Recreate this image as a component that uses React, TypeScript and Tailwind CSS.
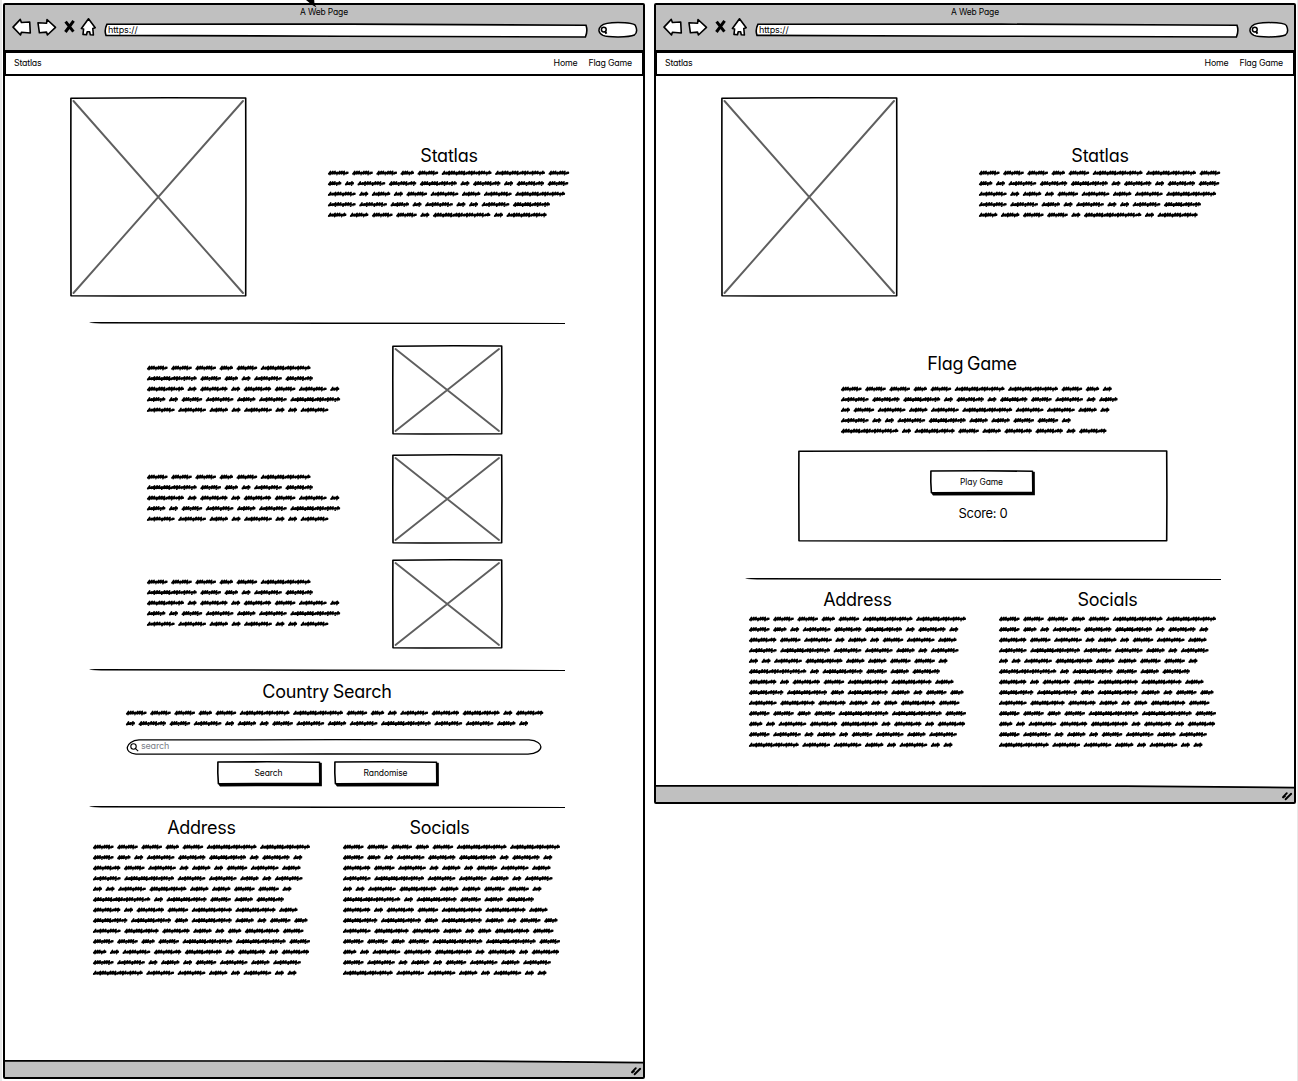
import React from "react";

const WORD: Record<string, number> = {
  a: 20.8, b: 13.6, c: 9.2, d: 27.9, e: 50, f: 27.6, g: 37.2, h: 18.6, i: 40.3, j: 57.6, k: 34.6,
};
const GAP = 3.4;
const LINE = 10.5;

const HERO = ["aaabaeea", "bcdfgcfcfa", "dchcadhde", "ddhcdccdg", "hhaacjci"];
const FEATURE = ["aaabae", "eabcdf", "gcfcfadc", "hcadhde", "ddhcdccd"];
const SEARCH = ["aaabaeeabcdfgcf", "cfadchcadhdeddhc"];
const FLAG = ["aaabaeeabc", "dfgcfcfadch", "cadhdeddhc", "dccdghhaac", "jciahffcf"];
const COLUMN = [
  "aaabaee", "abcdfgcfc", "fadchcadh", "deddhcd", "ccdghhaac", "jciahf", "fcfaiih",
  "kibihcab", "dkfhcbka", "aabaeea", "bcdfgcfcf", "adchcadhd", "eddhcdcc",
];

function wordPath(x: number, y: number, kind: string) {
  const w = WORD[kind];
  const heavy = "cdehi".includes(kind);
  let d = `M${x + 0.7} ${y + (heavy ? 1.2 : 0.9)}`;
  const n = Math.max(3, Math.round(w / 2.7));
  const step = (w - 2.4) / n;
  for (let i = 0; i < n; i++) {
    const px = x + 0.9 + i * step;
    const up = (i * 7 + (heavy ? 1 : 3)) % 4 === 0 ? 0.7 : 1.6;
    const down = (i * 5 + (heavy ? 2 : 0)) % 3 === 0 ? 1.6 : 0.9;
    d += `L${(px + step * 0.7).toFixed(2)} ${y - up}L${(px + step * 0.5).toFixed(2)} ${y + down}`;
  }
  d += `L${x + w - 1} ${y - 0.6}M${x + 0.8} ${y + 0.6}L${x + w - 1} ${y + 0.2}`;
  return d;
}

function Scribble({ lines, className }: { lines: string[]; className: string }) {
  const parts: string[] = [];
  lines.forEach((line, row) => {
    let x = 0;
    for (const kind of line) {
      parts.push(wordPath(x, 5 + row * LINE, kind));
      x += WORD[kind] + GAP;
    }
  });
  return (
    <svg className={"block shrink-0 overflow-visible " + className} fill="none" stroke="#000" strokeWidth="1.6" strokeLinejoin="round" strokeLinecap="round">
      <path d={parts.join("")} />
    </svg>
  );
}

function Outline({ w, h }: { w: number; h: number }) {
  return (
    <svg className="absolute inset-0 h-full w-full" viewBox={`0 0 ${w} ${h}`} fill="none" stroke="#000" strokeWidth="1.6" strokeLinejoin="round">
      <path d={`M.9 1.2L${w * 0.55} .8L${w - 1.3} 1L${w - 1.1} ${h * 0.5}L${w - 1.3} ${h - 1.3}L${w * 0.3} ${h - 1}L1 ${h - 1.2}L.8 ${h * 0.4}Z`} />
    </svg>
  );
}

function Placeholder({ w, h, className }: { w: number; h: number; className: string }) {
  return (
    <div className={"relative shrink-0 " + className}>
      <Outline w={w} h={h} />
      <svg className="absolute inset-0 h-full w-full" viewBox={`0 0 ${w} ${h}`} stroke="#5f5f5f" strokeWidth="1.9" strokeLinecap="round">
        <path d={`M3.5 4L${w - 4} ${h - 4}M${w - 4} 4L3.5 ${h - 4}`} />
      </svg>
    </div>
  );
}

function Rule({ className }: { className: string }) {
  return (
    <svg className={"block h-[3px] w-[476px] shrink-0 " + className} viewBox="0 0 476 3">
      <path d="M0 .5L6 0L240 .4L476 1V2L230 2L12 1.5L2 1.1Z" />
    </svg>
  );
}

function Heading({ children, className }: { children: React.ReactNode; className: string }) {
  return (
    <h2 className={"h-6 whitespace-nowrap text-center text-[18px] leading-6 tracking-[-0.25px] [word-spacing:-1px] " + className}>
      {children}
    </h2>
  );
}

function SketchButton({ children }: { children: React.ReactNode }) {
  return (
    <button className="relative h-[26px] w-[106px] pr-[3px] pb-[2px] text-[8.5px] leading-[22px] tracking-[-0.1px]">
      <svg className="absolute inset-0 h-full w-full" viewBox="0 0 106 26">
        <path d="M2 22L104.8 1.8L104.9 25.2L3 25.4Q1.6 25 1.6 22Z" />
        <path d="M.9 1L50 .8L102.6 1.2L102.8 22.4L50 22.6L1.4 22.8L.8 12Z" fill="#fff" stroke="#000" strokeWidth="1.6" strokeLinejoin="round" />
      </svg>
      <span className="relative">{children}</span>
    </button>
  );
}

function Chrome() {
  return (
    <header className="h-[48px] shrink-0 border-b-[3px] border-black bg-[#c0c0c0] pt-px">
      <div className="h-3 text-center text-[8.5px] leading-3 tracking-[-0.15px]">A Web Page</div>
      <div className="flex h-7 items-start pl-[7px]">
        <svg className="h-7 w-[88px] shrink-0" viewBox="0 0 88 28" fill="#fff" stroke="#000" strokeWidth="1.6" strokeLinejoin="round">
          <path d="M1 9.1L8.3 1.4L9.4 4.5L17.7 4L18.3 15L9.4 14.2L8.5 17Z" />
          <path d="M26 4.8L34.6 5.2L35 1.5L43.5 9.4L35.4 17L34.5 14.1L27.4 14.8Z" />
          <path d="M53.6 3.6L61.4 13.6M61.6 2.8L53.4 14" fill="none" strokeWidth="3" />
          <path d="M76.5 .8L83.2 9.7L80.8 10.5L81.4 17L78.3 16.8L77.6 13.7H75.2L74.5 16.8L71 16.4L71.6 11L69.4 10.5Z" />
        </svg>
        <div className="relative mt-[5px] h-[15px] w-[488px] shrink-0">
          <svg className="absolute inset-0 h-full w-full" viewBox="0 0 488 15" fill="#fff" stroke="#000" strokeWidth="1.6">
            <path d="M7 1.2L250 1.1L486 2.2Q488 8 485.4 14L240 13.2L6 12.4Q4 7 7 1.2Z" />
          </svg>
          <span className="relative ml-[8px] block text-[9px] leading-[14px] tracking-[-0.1px]">https://</span>
        </div>
        <svg className="mt-[3px] ml-[8px] h-[18px] w-[42px] shrink-0" viewBox="0 0 42 18" fill="#fff" stroke="#000" strokeWidth="1.5">
          <path d="M5 5C8 2.2 14 1.6 22 1.6C30 1.7 38 2 39.4 4.5C41 8 41 12 38.4 14C33 16.5 12 16.4 7 14.4C2 12 2 8 5 5Z" />
          <circle cx="7.8" cy="8.6" r="2.4" /><path d="M9.2 10.6L10.4 12.8" strokeWidth="2" />
        </svg>
      </div>
    </header>
  );
}

function Nav() {
  return (
    <nav className="-mt-px flex h-[24px] shrink-0 items-center border-b-2 border-l-[1.5px] border-r border-black pr-[10px] pl-2 text-[8.8px] leading-none tracking-[-0.2px]">
      <span>Statlas</span>
      <span className="ml-auto">Home</span>
      <span className="ml-[11px]">Flag Game</span>
    </nav>
  );
}

function Hero() {
  return (
    <section className="flex h-[200px] shrink-0 pl-[65px]">
      <Placeholder w={177} h={200} className="h-[200px] w-[177px]" />
      <div className="ml-[81px] mt-[47px] w-[242px]">
        <Heading className="">Statlas</Heading>
        <Scribble lines={HERO} className="h-[53px] w-[242px]" />
      </div>
    </section>
  );
}

function Feature() {
  return (
    <div className="flex h-[90px] items-start pl-[142px]">
      <Scribble lines={FEATURE} className="mt-[18px] h-[53px] w-[194px]" />
      <Placeholder w={111} h={90} className="ml-[51px] h-[90px] w-[111px]" />
    </div>
  );
}

function Contacts({ socialsClass }: { socialsClass: string }) {
  return (
    <section className="flex shrink-0 gap-[33px]">
      <div className="w-[217px]">
        <Heading className="">Address</Heading>
        <Scribble lines={COLUMN} className="mt-[2px] h-[137px] w-[217px]" />
      </div>
      <div className="w-[217px]">
        <Heading className={socialsClass}>Socials</Heading>
        <Scribble lines={COLUMN} className="mt-[2px] h-[137px] w-[217px]" />
      </div>
    </section>
  );
}

function StatusBar() {
  return (
    <footer className="relative mt-auto flex h-[17px] shrink-0 items-center justify-end pr-px pt-1">
      <svg className="absolute inset-0 h-full w-full" viewBox="0 0 638 17" preserveAspectRatio="none">
        <path d="M0 1H470L638 2.2V17H0Z" fill="#c0c0c0" />
        <path d="M0 .9L470 1.1L560 1.8L638 2.6" fill="none" stroke="#000" strokeWidth="1.7" />
      </svg>
      <svg className="relative h-3 w-3" viewBox="0 0 12 12" stroke="#000" strokeWidth="1.9" strokeLinecap="round">
        <path d="M2 7.2L5.8 3.2M4.6 9.3L10.2 3.8M2.4 7.4L4 6" />
      </svg>
    </footer>
  );
}

function Window({ children, className }: { children: React.ReactNode; className: string }) {
  return (
    <div className={"mt-[3px] flex w-[642px] shrink-0 flex-col rounded-[2px] border-2 border-black bg-white " + className}>
      <Chrome />
      <Nav />
      {children}
      <StatusBar />
    </div>
  );
}

export default function App() {
  return (
    <div className="relative flex h-[1081px] w-[1298px] items-start gap-[9px] overflow-hidden border-l-2 border-[#e8e8e8] bg-white pl-px font-['Inter',sans-serif] text-black [font-feature-settings:'cv11','ss03']">
      <Window className="h-[1076px]">
        <div className="h-[21px] shrink-0" />
        <Hero />
        <Rule className="mt-[25px] ml-[84px]" />
        <div className="mt-[20px] shrink-0">
          <Feature />
          <div className="h-[19px]" />
          <Feature />
          <div className="h-[15px]" />
          <Feature />
        </div>
        <Rule className="mt-5 ml-[84px]" />
        <section className="ml-[121px] mt-2 w-[418px] shrink-0">
          <Heading className="-ml-4">Country Search</Heading>
          <Scribble lines={SEARCH} className="mt-1 h-[21px] w-[418px]" />
          <div className="relative mt-[10px] flex h-[16px] w-[416px] items-center pl-[4px]">
            <svg className="absolute inset-0 h-full w-full" viewBox="0 0 416 16" fill="#fff" stroke="#000" strokeWidth="1.3">
              <path d="M13 .9L210 .7L403 .9C419 2 419 14 402 15.2L200 15L10 15.2C-3 14 -1 2 13 .9Z" />
            </svg>
            <svg className="relative h-[9px] w-[9px]" viewBox="0 0 9 9" fill="none" stroke="#000" strokeWidth="1.1"><circle cx="3.5" cy="3.5" r="2.7" /><path d="M5.5 5.6L8.2 8.2" /></svg>
            <span className="relative ml-[2px] pb-[2px] text-[9px] leading-3 tracking-[-0.2px] text-[#7b8088]">search</span>
          </div>
          <div className="mt-[6px] ml-[91px] flex gap-[11px]">
            <SketchButton>Search</SketchButton>
            <SketchButton>Randomise</SketchButton>
          </div>
        </section>
        <Rule className="mt-[19px] ml-[84px]" />
        <div className="mt-[7px] ml-[88px]"><Contacts socialsClass="-ml-6" /></div>
      </Window>
      <Window className="h-[801px]">
        <div className="h-[21px] shrink-0" />
        <Hero />
        <section className="ml-[142px] mt-[55px] w-[370px] shrink-0">
          <Heading className="-ml-[22px]">Flag Game</Heading>
          <Scribble lines={FLAG} className="ml-[43px] mt-2 h-[53px] w-[277px]" />
          <div className="relative mt-[13px] flex h-[92px] flex-col items-center pt-[20px]">
            <Outline w={370} h={92} />
            <SketchButton>Play Game</SketchButton>
            <div className="relative mt-[9px] text-[13px] leading-4 tracking-[-0.3px]">Score: 0</div>
          </div>
        </section>
        <Rule className="mt-[36px] ml-[89px]" />
        <div className="mt-[7px] ml-[93px]"><Contacts socialsClass="" /></div>
      </Window>
      <svg className="absolute left-[302px] top-0 h-[9px] w-[14px]" viewBox="0 0 14 9"><path d="M2 0H10.2L10.5 4L12.5 7.5L7.5 4.5Z" /></svg>
      <div className="absolute right-0 top-0 h-full w-px bg-[#e8e8e8]" />
    </div>
  );
}
